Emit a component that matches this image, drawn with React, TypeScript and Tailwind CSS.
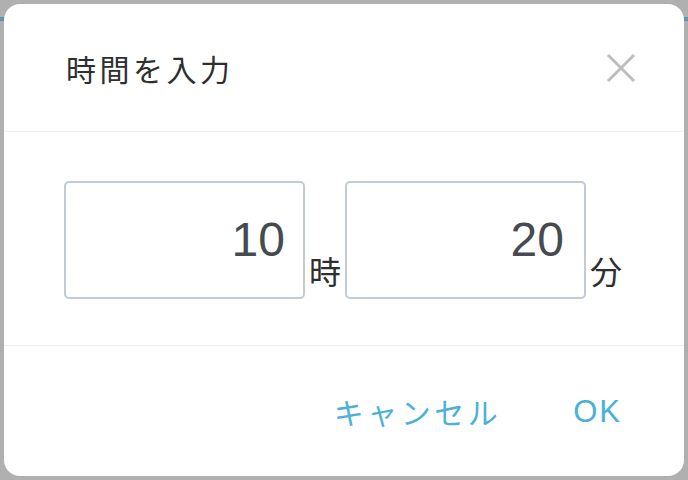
import React from "react";

export default function App() {
  const jp = { fontFamily: '"Noto Sans CJK JP", "Noto Sans", sans-serif' };
  return (
    <div className="relative w-[688px] h-[480px] bg-[#b0b0b0] overflow-hidden p-[4px]" style={jp}>
      <div className="absolute left-0 right-0 top-[17px] h-[4px] bg-[#6195a7]" />
      <div className="relative flex flex-col h-full w-full bg-white rounded-[16px] overflow-hidden">
        <div className="h-[128px] flex items-center justify-between pl-[62px] pr-[48px] border-b-[1.5px] border-[#efefef]">
          <div className="text-[30px] tracking-[3.5px] text-[#2f2f2f] leading-none">時間を入力</div>
          <svg width="30" height="30" viewBox="0 0 30 30" className="mt-[1px]">
            <path d="M2 2 L28 28 M28 2 L2 28" stroke="#bdbdbd" strokeWidth="3" />
          </svg>
        </div>
        <div className="h-[214px] flex items-end pl-[60px] pb-[46px] border-b-[1.5px] border-[#efefef]">
          <div className="w-[241px] h-[118px] border-[2px] border-[#c2cad6] rounded-[5px] flex items-center justify-end pr-[18px]">
            <span className="text-[48px] text-[#474b51] leading-none" style={{ fontFamily: '"Liberation Sans", Arial, sans-serif' }}>10</span>
          </div>
          <div className="w-[40px] text-center text-[32px] leading-none text-[#2f2f2f] pb-[13px]">時</div>
          <div className="w-[241px] h-[118px] border-[2px] border-[#c2cad6] rounded-[5px] flex items-center justify-end pr-[20px]">
            <span className="text-[48px] text-[#474b51] leading-none" style={{ fontFamily: '"Liberation Sans", Arial, sans-serif' }}>20</span>
          </div>
          <div className="w-[40px] text-center text-[32px] leading-none text-[#2f2f2f] pb-[13px]">分</div>
        </div>
        <div className="flex-1 flex items-center justify-end pr-[62px] gap-[75px] text-[#4cb1d7]">
          <span className="text-[30px] tracking-[3.5px] leading-none -mr-[3px]">キャンセル</span>
          <span className="text-[31px] tracking-[2px] leading-none" style={{ fontFamily: '"Liberation Sans", Arial, sans-serif' }}>OK</span>
        </div>
      </div>
    </div>
  );
}
